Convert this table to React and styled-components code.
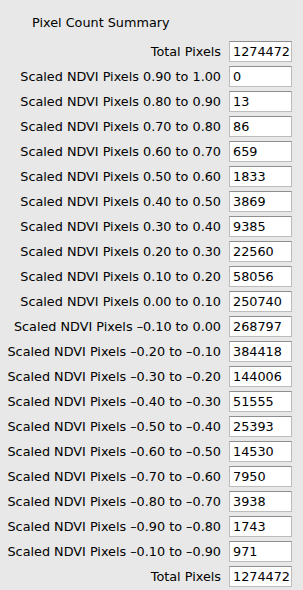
import { Fragment } from "react";
import styled, { createGlobalStyle } from "styled-components";

const rows = [
  ["Total Pixels", "1274472"],
  ["Scaled NDVI Pixels 0.90 to 1.00", "0"],
  ["Scaled NDVI Pixels 0.80 to 0.90", "13"],
  ["Scaled NDVI Pixels 0.70 to 0.80", "86"],
  ["Scaled NDVI Pixels 0.60 to 0.70", "659"],
  ["Scaled NDVI Pixels 0.50 to 0.60", "1833"],
  ["Scaled NDVI Pixels 0.40 to 0.50", "3869"],
  ["Scaled NDVI Pixels 0.30 to 0.40", "9385"],
  ["Scaled NDVI Pixels 0.20 to 0.30", "22560"],
  ["Scaled NDVI Pixels 0.10 to 0.20", "58056"],
  ["Scaled NDVI Pixels 0.00 to 0.10", "250740"],
  ["Scaled NDVI Pixels \u20130.10 to 0.00", "268797"],
  ["Scaled NDVI Pixels \u20130.20 to \u20130.10", "384418"],
  ["Scaled NDVI Pixels \u20130.30 to \u20130.20", "144006"],
  ["Scaled NDVI Pixels \u20130.40 to \u20130.30", "51555"],
  ["Scaled NDVI Pixels \u20130.50 to \u20130.40", "25393"],
  ["Scaled NDVI Pixels \u20130.60 to \u20130.50", "14530"],
  ["Scaled NDVI Pixels \u20130.70 to \u20130.60", "7950"],
  ["Scaled NDVI Pixels \u20130.80 to \u20130.70", "3938"],
  ["Scaled NDVI Pixels \u20130.90 to \u20130.80", "1743"],
  ["Scaled NDVI Pixels \u20130.10 to \u20130.90", "971"],
  ["Total Pixels", "1274472"],
];

const GlobalStyle = createGlobalStyle`
    html, body {
        margin: 0;
        padding: 0;
        background: #e8e8e8;
    }
`

const Panel = styled.div`
    width: 303px;
    height: 590px;
    box-sizing: border-box;
    padding: 14px 11px 0 0;
    background: #e8e8e8;
    font-family: "DejaVu Sans", "Liberation Sans", sans-serif;
    font-size: 12.8px;
    color: #000;
    overflow: hidden;
`

const Title = styled.div`
    padding-left: 32px;
    height: 27px;
    line-height: 17px;
`

const Grid = styled.div`
    display: grid;
    grid-template-columns: 1fr 63px;
    column-gap: 8px;
    row-gap: 4px;
    align-items: center;
`

const Label = styled.div`
    text-align: right;
    white-space: nowrap;
`

const Field = styled.div`
    height: 21px;
    box-sizing: border-box;
    padding: 0 0 0 3px;
    line-height: 20px;
    background: #fff;
    border: 1px solid #bcbcbc;
    border-top-color: #8e8e8e;
    white-space: nowrap;
    overflow: hidden;
`

const App = () => {
    return (
        <Panel>
            <GlobalStyle />
            <Title>Pixel Count Summary</Title>
            <Grid>
                {rows.map(([label, value], i) => (
                    <Fragment key={i}>
                        <Label>{label}</Label>
                        <Field>{value}</Field>
                    </Fragment>
                ))}
            </Grid>
        </Panel>
    )
}

export default App
